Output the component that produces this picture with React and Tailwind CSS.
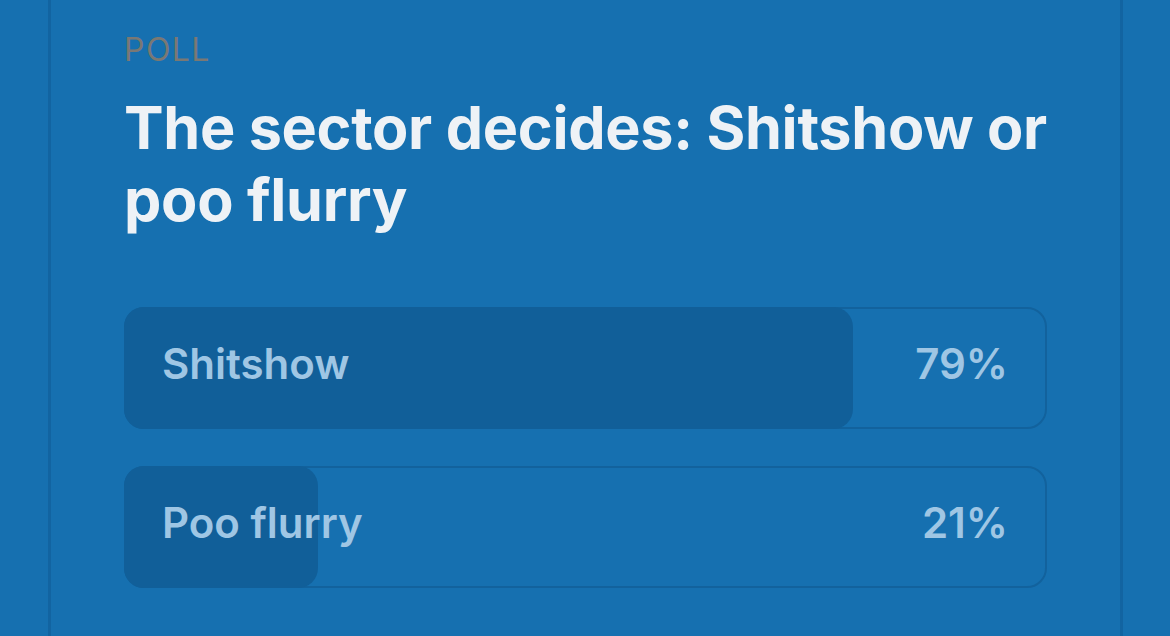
export default function App() {
  const options = [
    { label: "Shitshow", pct: 79 },
    { label: "Poo flurry", pct: 21 },
  ];
  return (
    <div className="w-[1170px] h-[636px] overflow-hidden bg-[#1670b0]" style={{ fontFamily: "Inter, 'Noto Sans', sans-serif" }}>
      <div className="ml-[48px] w-[1075px] h-full border-x-[3px] border-[#1264a1] px-[73px] pt-[30px]">
        <div className="text-[32px] leading-[40px] tracking-[0.045em] text-[#7a7874] font-normal">POLL</div>
        <h1 className="mt-[22px] text-[59.3px] leading-[72px] font-bold text-[#eef2f6] tracking-[-0.005em]">
          The sector decides: Shitshow or poo flurry
        </h1>
        <div className="mt-[71px] flex flex-col gap-[37px]">
          {options.map((o) => (
            <div key={o.label} className="relative h-[122px] rounded-[20px]">
              <div className="absolute inset-0 rounded-[20px] border-2 border-[#12629d]" />
              <div className="absolute left-0 top-0 bottom-0 rounded-[20px] bg-[#115f99]" style={{ width: `${o.pct}%` }} />
              <div className="relative h-full flex items-center justify-between pl-[38px] pr-[39px] text-[42px] font-semibold text-[#9fc6e4] pb-[9px]">
                <span>{o.label}</span>
                <span>{o.pct}%</span>
              </div>
            </div>
          ))}
        </div>
      </div>
    </div>
  );
}
